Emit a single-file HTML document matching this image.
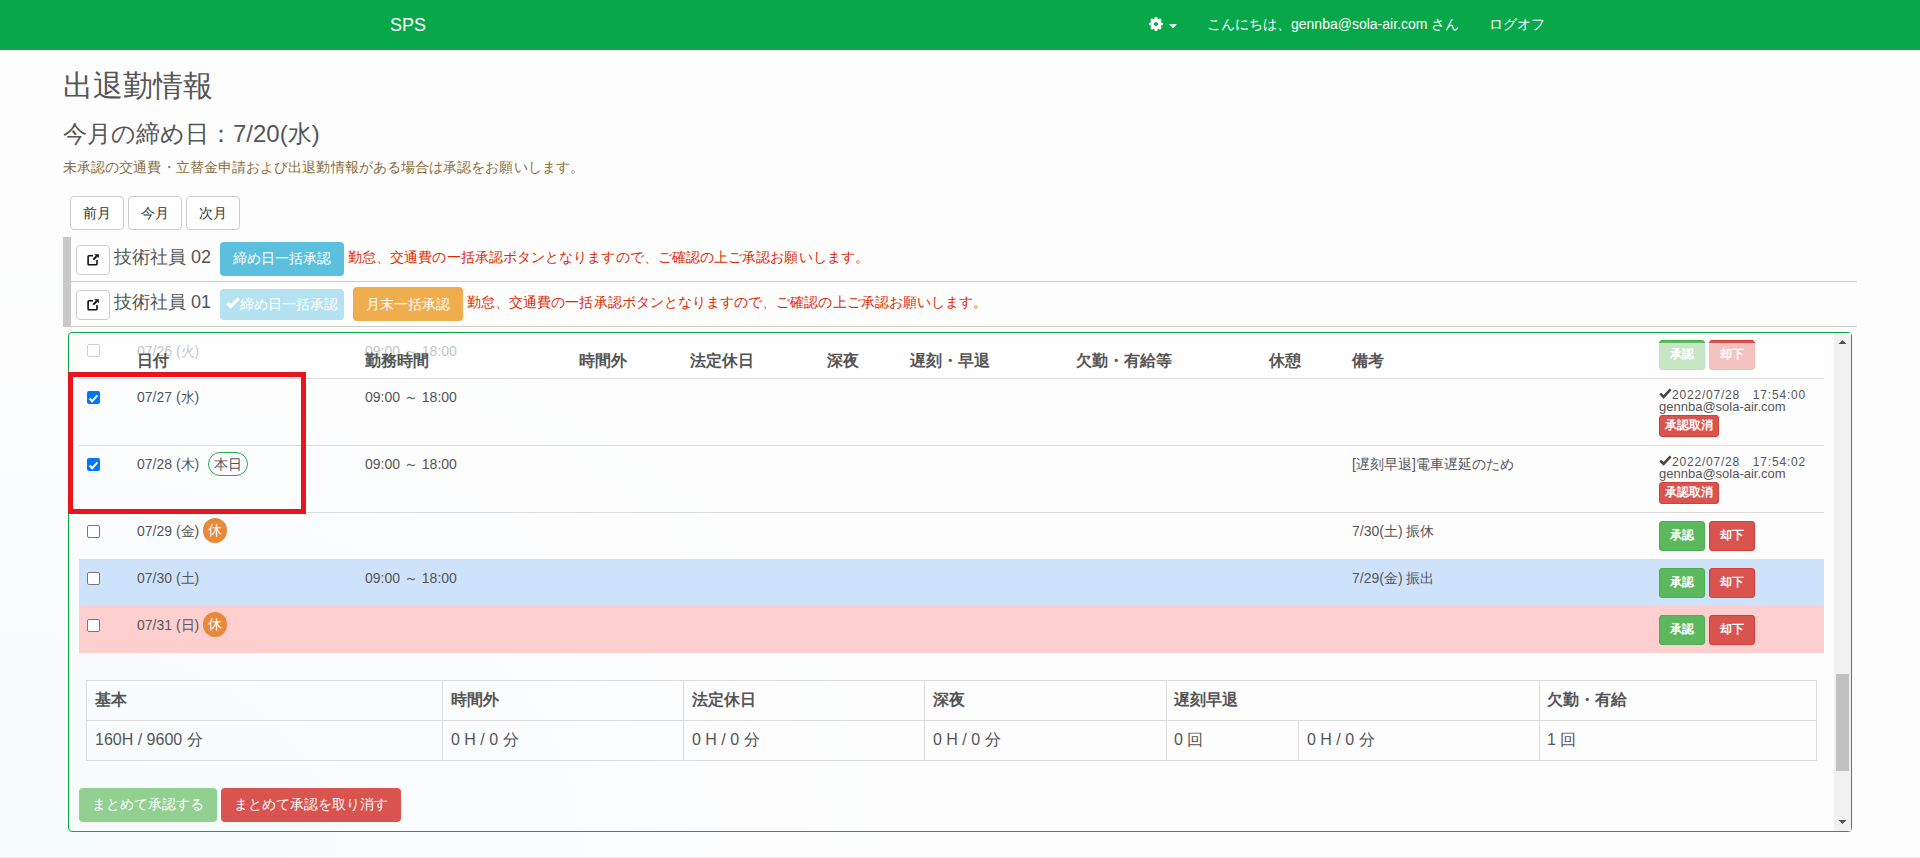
<!DOCTYPE html>
<html><head><meta charset="utf-8">
<style>
*{box-sizing:border-box;margin:0;padding:0}
html,body{width:1920px;height:858px;overflow:hidden}
body{position:relative;background:radial-gradient(ellipse 900px 600px at 0% 100%, #f6fbfc 0%, #fafcfd 45%, rgba(253,253,253,0) 100%),#fdfdfd;font-family:"Liberation Sans",sans-serif;color:#333;font-size:14px;line-height:1.42857}
.a{position:absolute;white-space:nowrap}
.nav{left:0;top:0;width:1920px;height:50px;background:#08a84a}
.nt{color:#fff;font-size:14px}
.btn{position:absolute;border:1px solid #ccc;border-radius:4px;background:#fff;color:#333;font-size:14px;text-align:center;white-space:nowrap}
.hr{position:absolute;height:1px;background:#ccc}
.red{color:#dc2a00}
.cb{position:absolute;width:13px;height:13px;border:1px solid #767676;border-radius:2px;background:#fff}
.cbc{position:absolute;width:13px;height:13px;border-radius:2px;background:#0075ff}
.sep{position:absolute;left:79px;width:1745px;height:1px;background:#ddd}
.td{position:absolute;color:#555;font-size:14px;white-space:nowrap}
.th{position:absolute;color:#555;font-size:16px;font-weight:bold;white-space:nowrap}
.bs{position:absolute;font-weight:bold;background:#5cb85c;border:1px solid #4cae4c;color:#fff;border-radius:3px;font-size:12px;text-align:center}
.bd{position:absolute;font-weight:bold;background:#d9534f;border:1px solid #d43f3a;color:#fff;border-radius:3px;font-size:12px;text-align:center}
.kyu{position:absolute;width:24px;height:25px;border-radius:12px;background:#e8893c;color:#fff;font-size:14px;text-align:center;line-height:25px}
.st{position:absolute;border-collapse:collapse}
</style></head><body>
<!-- navbar -->
<div class="a nav"></div>
<div class="a nt" style="left:390px;top:13px;font-size:18px">SPS</div>
<svg class="a" style="left:1148px;top:16px" width="16" height="16" viewBox="0 0 16 16"><path fill="#fff" fill-rule="evenodd" d="M6.27,2.99 L6.90,1.09 L9.10,1.09 L9.73,2.99 L10.32,3.24 L12.11,2.34 L13.66,3.89 L12.76,5.68 L13.01,6.27 L14.91,6.90 L14.91,9.10 L13.01,9.73 L12.76,10.32 L13.66,12.11 L12.11,13.66 L10.32,12.76 L9.73,13.01 L9.10,14.91 L6.90,14.91 L6.27,13.01 L5.68,12.76 L3.89,13.66 L2.34,12.11 L3.24,10.32 L2.99,9.73 L1.09,9.10 L1.09,6.90 L2.99,6.27 L3.24,5.68 L2.34,3.89 L3.89,2.34 L5.68,3.24 Z M10.1 8 A2.1 2.1 0 1 0 5.9 8 A2.1 2.1 0 1 0 10.1 8 Z"/></svg>
<svg class="a" style="left:1169px;top:24px" width="9" height="6"><path d="M0 0.2 L8 0.2 L4 4.2 Z" fill="#fff"/></svg>
<div class="a nt" style="left:1207px;top:15px;">こんにちは、gennba@sola-air.com さん</div>
<div class="a nt" style="left:1489px;top:15px;">ログオフ</div>

<!-- headings -->
<div class="a" style="left:63px;top:65px;font-size:30px;color:#555">出退勤情報</div>
<div class="a" style="left:63px;top:117px;font-size:24px;color:#555">今月の締め日：7/20(水)</div>
<div class="a" style="left:63px;top:158px;font-size:14px;color:#8a6d3b;letter-spacing:.08px">未承認の交通費・立替金申請および出退勤情報がある場合は承認をお願いします。</div>

<div class="btn" style="left:70px;top:196px;width:54px;height:34px;line-height:32px">前月</div>
<div class="btn" style="left:128px;top:196px;width:54px;height:34px;line-height:32px">今月</div>
<div class="btn" style="left:186px;top:196px;width:54px;height:34px;line-height:32px">次月</div>

<!-- employees -->
<div class="a" style="left:63px;top:237px;width:8px;height:90px;background:#c8c8c8"></div>
<div class="hr" style="left:71px;top:281px;width:1786px"></div>
<div class="hr" style="left:63px;top:326px;width:1794px"></div>


<div class="btn" style="left:76px;top:245px;width:34px;height:30px"><svg width="34" height="30" style="position:absolute;left:-1px;top:-1px"><path d="M17 10.8 L13 10.8 Q12.1 10.8 12.1 11.7 L12.1 18.9 Q12.1 19.8 13 19.8 L20.1 19.8 Q21 19.8 21 18.9 L21 15" fill="none" stroke="#111" stroke-width="1.6"/><path d="M17.3 14.6 L20.6 11.3" stroke="#111" stroke-width="2"/><path d="M18 9.2 L22.8 9.2 L22.8 13 Z" fill="#111"/></svg></div>
<div class="a" style="left:114px;top:245px;font-size:18px;color:#555">技術社員 02</div>
<div class="a" style="left:220px;top:242px;width:124px;height:34px;border-radius:4px;background:#5bc0de;color:#fff;font-size:14px;text-align:center;line-height:32px">締め日一括承認</div>
<div class="a red" style="left:348px;top:248px;font-size:14px;letter-spacing:.08px">勤怠、交通費の一括承認ボタンとなりますので、ご確認の上ご承認お願いします。</div>

<div class="btn" style="left:76px;top:290px;width:34px;height:30px"><svg width="34" height="30" style="position:absolute;left:-1px;top:-1px"><path d="M17 10.8 L13 10.8 Q12.1 10.8 12.1 11.7 L12.1 18.9 Q12.1 19.8 13 19.8 L20.1 19.8 Q21 19.8 21 18.9 L21 15" fill="none" stroke="#111" stroke-width="1.6"/><path d="M17.3 14.6 L20.6 11.3" stroke="#111" stroke-width="2"/><path d="M18 9.2 L22.8 9.2 L22.8 13 Z" fill="#111"/></svg></div>
<div class="a" style="left:114px;top:290px;font-size:18px;color:#555">技術社員 01</div>
<div class="a" style="left:220px;top:289px;width:124px;height:31px;border-radius:4px;background:#b4e2f0"></div><svg class="a" style="left:226px;top:297px" width="15" height="12"><path d="M1.3 6.2 L4.6 9.4 L12.8 1.3" fill="none" stroke="#fff" stroke-width="3.2"/></svg><div class="a" style="left:240px;top:289px;color:#fff;font-size:14px;line-height:31px">締め日一括承認</div>
<div class="a" style="left:353px;top:287px;width:110px;height:34px;border-radius:4px;background:#f0ad4e;color:#fff;font-size:14px;text-align:center;line-height:34px">月末一括承認</div>
<div class="a red" style="left:467px;top:293px;font-size:14px;letter-spacing:.06px">勤怠、交通費の一括承認ボタンとなりますので、ご確認の上ご承認お願いします。</div>

<!-- panel -->
<div class="a" style="left:68px;top:332px;width:1784px;height:500px;border:1px solid #08a84a;border-radius:4px"></div>
<!-- scrollbar -->
<div class="a" style="left:1834px;top:333px;width:17px;height:498px;background:#f1f1f1"></div>
<div class="a" style="left:1836px;top:674px;width:13px;height:97px;background:#c1c1c1"></div>
<svg class="a" style="left:1834px;top:333px" width="17" height="17"><path d="M4.5 11 L8.5 7 L12.5 11 Z" fill="#505050"/></svg>
<svg class="a" style="left:1834px;top:814px" width="17" height="17"><path d="M4.5 6 L8.5 10 L12.5 6 Z" fill="#505050"/></svg>

<!-- 07/26 row (behind header) -->
<div class="cb" style="left:87px;top:344px"></div>
<div class="td" style="left:137px;top:341.5px">07/26 (火)</div>
<div class="td" style="left:365px;top:341.5px">09:00 ～ 18:00</div>
<div class="bs" style="left:1659px;top:340px;width:46px;height:30px;line-height:27px">承認</div>
<div class="bd" style="left:1709px;top:340px;width:46px;height:30px;line-height:27px">却下</div>
<!-- header overlay -->
<div class="a" style="left:79px;top:343px;width:1745px;height:35px;background:rgba(255,255,255,.65)"></div>
<div class="th" style="left:137px;top:350px">日付</div>
<div class="th" style="left:365px;top:350px">勤務時間</div>
<div class="th" style="left:579px;top:350px">時間外</div>
<div class="th" style="left:690px;top:350px">法定休日</div>
<div class="th" style="left:827px;top:350px">深夜</div>
<div class="th" style="left:910px;top:350px">遅刻・早退</div>
<div class="th" style="left:1076px;top:350px">欠勤・有給等</div>
<div class="th" style="left:1269px;top:350px">休憩</div>
<div class="th" style="left:1352px;top:350px">備考</div>
<div class="sep" style="top:378px"></div>

<!-- 07/27 -->
<div class="cbc" style="left:87px;top:391px"><svg width="13" height="13"><path d="M2.6 6.6 L5.2 9.2 L10.4 3.4" stroke="#fff" stroke-width="2.1" fill="none"/></svg></div>
<div class="td" style="left:137px;top:388px">07/27 (水)</div>
<div class="td" style="left:365px;top:388px">09:00 ～ 18:00</div>
<svg class="a" style="left:1659px;top:388px" width="13" height="11"><path d="M1.2 5.6 L4.6 8.8 L11.6 1.4" fill="none" stroke="#454545" stroke-width="2.6"/></svg><div class="td" style="left:1672px;top:388.6px;font-size:12px;line-height:12px;letter-spacing:.8px">2022/07/28　17:54:00</div><div class="td" style="left:1659px;top:400px;font-size:13px;line-height:13px">gennba@sola-air.com</div>
<div class="bd" style="left:1659px;top:415px;width:60px;height:22px;line-height:19px;font-size:12px;font-weight:bold">承認取消</div>
<div class="sep" style="top:445px"></div>

<!-- 07/28 -->
<div class="cbc" style="left:87px;top:458px"><svg width="13" height="13"><path d="M2.6 6.6 L5.2 9.2 L10.4 3.4" stroke="#fff" stroke-width="2.1" fill="none"/></svg></div>
<div class="td" style="left:137px;top:455px">07/28 (木)</div>
<div class="a" style="left:208px;top:452px;width:40px;height:24px;border:1px solid #22aa55;border-radius:12px;color:#555;font-size:14px;text-align:center;line-height:22px">本日</div>
<div class="td" style="left:365px;top:455px">09:00 ～ 18:00</div>
<div class="td" style="left:1352px;top:455px">[遅刻早退]電車遅延のため</div>
<svg class="a" style="left:1659px;top:455px" width="13" height="11"><path d="M1.2 5.6 L4.6 8.8 L11.6 1.4" fill="none" stroke="#454545" stroke-width="2.6"/></svg><div class="td" style="left:1672px;top:455.6px;font-size:12px;line-height:12px;letter-spacing:.8px">2022/07/28　17:54:02</div><div class="td" style="left:1659px;top:467px;font-size:13px;line-height:13px">gennba@sola-air.com</div>
<div class="bd" style="left:1659px;top:482px;width:60px;height:22px;line-height:19px;font-size:12px;font-weight:bold">承認取消</div>
<div class="sep" style="top:512px"></div>

<!-- 07/29 -->
<div class="cb" style="left:87px;top:525px"></div>
<div class="td" style="left:137px;top:522px">07/29 (金)</div>
<div class="kyu" style="left:203px;top:518px">休</div>
<div class="td" style="left:1352px;top:522px">7/30(土) 振休</div>
<div class="bs" style="left:1659px;top:521px;width:46px;height:30px;line-height:27px">承認</div>
<div class="bd" style="left:1709px;top:521px;width:46px;height:30px;line-height:27px">却下</div>

<!-- 07/30 -->
<div class="a" style="left:79px;top:559px;width:1745px;height:47px;background:#cfe2fc"></div>
<div class="cb" style="left:87px;top:572px"></div>
<div class="td" style="left:137px;top:569px">07/30 (土)</div>
<div class="td" style="left:365px;top:569px">09:00 ～ 18:00</div>
<div class="td" style="left:1352px;top:569px">7/29(金) 振出</div>
<div class="bs" style="left:1659px;top:568px;width:46px;height:30px;line-height:27px">承認</div>
<div class="bd" style="left:1709px;top:568px;width:46px;height:30px;line-height:27px">却下</div>

<!-- 07/31 -->
<div class="a" style="left:79px;top:606px;width:1745px;height:47px;background:#fdcfcf"></div>
<div class="cb" style="left:87px;top:619px"></div>
<div class="td" style="left:137px;top:616px">07/31 (日)</div>
<div class="kyu" style="left:203px;top:612px">休</div>
<div class="bs" style="left:1659px;top:615px;width:46px;height:30px;line-height:27px">承認</div>
<div class="bd" style="left:1709px;top:615px;width:46px;height:30px;line-height:27px">却下</div>

<!-- red rect -->
<div class="a" style="left:68px;top:372px;width:238px;height:142px;border:5px solid #e8141e"></div>

<!-- summary -->
<div class="a" style="left:86px;top:680px;width:1731px;height:81px;border:1px solid #ddd"></div>
<div class="a" style="left:86px;top:720px;width:1731px;height:1px;background:#ddd"></div>
<div class="a" style="left:442px;top:680px;width:1px;height:81px;background:#ddd"></div>
<div class="a" style="left:683px;top:680px;width:1px;height:81px;background:#ddd"></div>
<div class="a" style="left:924px;top:680px;width:1px;height:81px;background:#ddd"></div>
<div class="a" style="left:1166px;top:680px;width:1px;height:81px;background:#ddd"></div>
<div class="a" style="left:1298px;top:720px;width:1px;height:41px;background:#ddd"></div>
<div class="a" style="left:1539px;top:680px;width:1px;height:81px;background:#ddd"></div>
<div class="th" style="left:95px;top:689px;font-size:16px">基本</div>
<div class="th" style="left:451px;top:689px;font-size:16px">時間外</div>
<div class="th" style="left:692px;top:689px;font-size:16px">法定休日</div>
<div class="th" style="left:933px;top:689px;font-size:16px">深夜</div>
<div class="th" style="left:1174px;top:689px;font-size:16px">遅刻早退</div>
<div class="th" style="left:1547px;top:689px;font-size:16px">欠勤・有給</div>
<div class="td" style="left:95px;top:729px;font-size:16px">160H / 9600 分</div>
<div class="td" style="left:451px;top:729px;font-size:16px">0 H / 0 分</div>
<div class="td" style="left:692px;top:729px;font-size:16px">0 H / 0 分</div>
<div class="td" style="left:933px;top:729px;font-size:16px">0 H / 0 分</div>
<div class="td" style="left:1174px;top:729px;font-size:16px">0 回</div>
<div class="td" style="left:1307px;top:729px;font-size:16px">0 H / 0 分</div>
<div class="td" style="left:1547px;top:729px;font-size:16px">1 回</div>

<div class="a" style="left:79px;top:788px;width:138px;height:34px;border-radius:4px;background:#92d092;color:#fff;font-size:14px;text-align:center;line-height:33px">まとめて承認する</div>
<div class="a" style="left:221px;top:788px;width:180px;height:34px;border-radius:4px;background:#d9534f;color:#fff;font-size:14px;text-align:center;line-height:33px">まとめて承認を取り消す</div>
<div class="a" style="left:0;top:857px;width:1920px;height:1px;background:#eee"></div>
</body></html>
